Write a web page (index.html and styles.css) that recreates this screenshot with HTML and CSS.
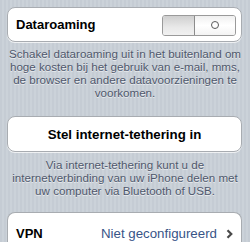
FILE: index.html
```html
<!DOCTYPE html>
<html>
<head>
<meta charset="utf-8">
<link rel="stylesheet" href="styles.css">
</head>
<body>
<div class="page">
  <div class="card row">
    <span class="label">Dataroaming</span>
    <div class="switch">
      <div class="sw-left"></div>
      <div class="sw-right"><span class="ring"></span></div>
    </div>
  </div>
  <p class="footer f1">Schakel dataroaming uit in het buitenland om hoge kosten bij het gebruik van e-mail, mms, de browser en andere datavoorzieningen te voorkomen.</p>
  <div class="card button">Stel internet-tethering in</div>
  <p class="footer f2">Via internet-tethering kunt u de internetverbinding van uw iPhone delen met uw computer via Bluetooth of USB.</p>
  <div class="card row vpn">
    <span class="label">VPN</span>
    <span class="value">Niet geconfigureerd</span>
    <svg class="chev" width="7" height="10" viewBox="0 0 7 10"><path d="M1.5 1.2 L5.3 5 L1.5 8.8" fill="none" stroke="#4a4a4a" stroke-width="2.2"/></svg>
  </div>
</div>
</body>
</html>
```

FILE: styles.css
```css
html, body {
  margin: 0;
  padding: 0;
  width: 250px;
  height: 242px;
  overflow: hidden;
}
body {
  background-color: #c5ccd4;
  background-image: repeating-linear-gradient(90deg, #c5ccd4 0px, #c5ccd4 2px, #cbd2d9 2px, #cbd2d9 4px);
  font-family: "Liberation Sans", Arial, sans-serif;
}
.page {
  padding-top: 7px;
}
.card {
  box-sizing: border-box;
  margin: 0 8px 0 7px;
  height: 35px;
  background: #fff;
  border: 1px solid #a8acb1;
  border-radius: 8px;
  box-shadow: 0 1px 0 rgba(255,255,255,0.7);
}
.row {
  display: flex;
  align-items: center;
  padding: 0 5px 0 8px;
}
.label {
  font-weight: bold;
  font-size: 13px;
  color: #000;
  flex: 1;
}
.switch {
  width: 74px;
  height: 21px;
  box-sizing: border-box;
  border: 1px solid #9a9a9a;
  border-radius: 3px;
  display: flex;
  overflow: hidden;
  margin-top: 1px;
}
.sw-left {
  width: 31px;
  background: linear-gradient(#cfcfcf, #e9e9e9 60%, #f1f1f1);
  border-right: 1px solid #8c8c8c;
}
.sw-right {
  flex: 1;
  background: linear-gradient(#f0f0f0, #ffffff 50%, #f3f3f3);
  display: flex;
  align-items: center;
  justify-content: center;
}
.ring {
  width: 6px;
  height: 6px;
  border: 1.5px solid #5a5a5a;
  border-radius: 50%;
}
.footer {
  margin: 0;
  padding: 0 3px;
  font-size: 11.6px;
  line-height: 13px;
  color: #4f586c;
  text-align: center;
  text-shadow: 0 1px 0 rgba(255,255,255,0.6);
}
.f1 {
  margin-top: 5px;
  margin-bottom: 17px;
}
.button {
  display: flex;
  align-items: center;
  justify-content: center;
  font-weight: bold;
  font-size: 13.3px;
  color: #000;
  height: 36px;
}
.f2 {
  margin-top: 6px;
  margin-bottom: 15px;
  padding: 0 6px;
}
.vpn {
  height: 40px;
  align-items: flex-start;
  padding-top: 13px;
  border-bottom: none;
  border-radius: 8px 8px 0 0;
}
.value {
  font-size: 13.3px;
  color: #385487;
}
.chev {
  margin: 3px 3px 0 9px;
}
```
